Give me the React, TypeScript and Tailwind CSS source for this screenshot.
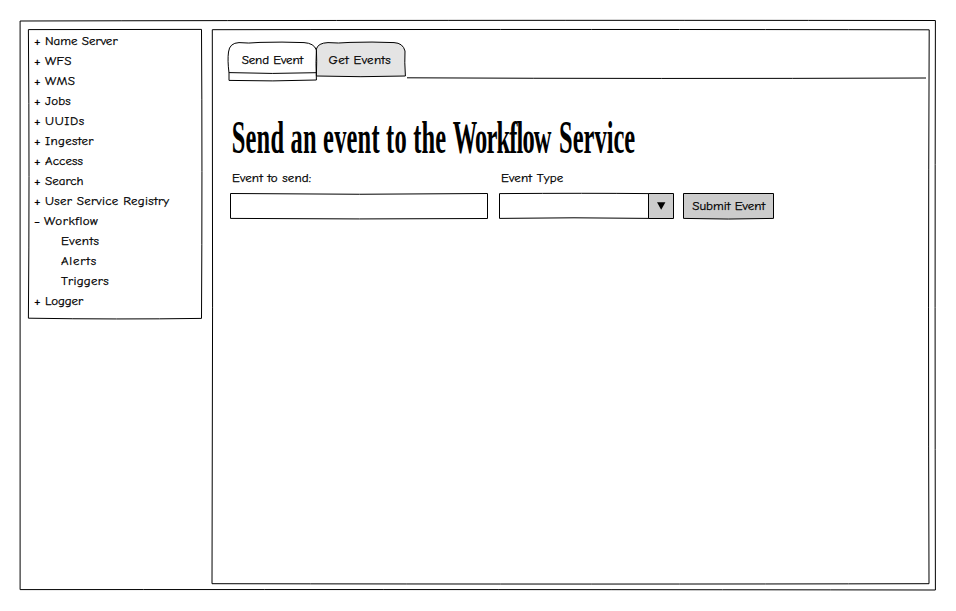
import type { ReactNode } from 'react';

const hand = "font-['Comic_Sans_MS','Comic_Neue','Open_Sans',sans-serif]";

function Sketch({ d, fill = 'none' }: { d: string; fill?: string }) {
  return (
    <svg className="pointer-events-none absolute inset-0 h-full w-full overflow-visible" aria-hidden="true">
      <path d={d} fill={fill} stroke="#000" strokeWidth="1" strokeLinejoin="round" />
    </svg>
  );
}

function Label({ children, className = '' }: { children: ReactNode; className?: string }) {
  return <span className={`relative block scale-x-[1.083] whitespace-pre ${className}`}>{children}</span>;
}

const items = [
  { sign: '+', text: 'Name Server', style: 'tracking-[0px]' },
  { sign: '+', text: 'WFS', style: 'tracking-[0.2px]' },
  { sign: '+', text: 'WMS', style: 'tracking-[0.3px]' },
  { sign: '+', text: 'Jobs', style: 'tracking-[0.2px]' },
  { sign: '+', text: 'UUIDs', style: 'tracking-[0.6px]' },
  { sign: '+', text: 'Ingester', style: 'tracking-[0.3px]' },
  { sign: '+', text: 'Access', style: 'tracking-[0.1px]' },
  { sign: '+', text: 'Search', style: 'tracking-[0px]' },
  { sign: '+', text: 'User Service Registry', style: 'tracking-[0.25px]' },
  { sign: '-', text: 'Workflow', style: 'tracking-[0.5px] -ml-px' },
  { sign: '', text: 'Events', style: 'tracking-[0.4px]' },
  { sign: '', text: 'Alerts', style: 'tracking-[0.75px]' },
  { sign: '', text: 'Triggers', style: 'tracking-[0.25px]' },
  { sign: '+', text: 'Logger', style: 'tracking-[-0.1px]' },
];

function Sidebar() {
  return (
    <nav className="relative h-[290px] w-[174px] pt-0.5 pl-[7px]">
      <Sketch d="M.4 .6 L173.5 .4 Q174.4 140 173.5 289.4 Q90 290.6 .4 289.2 Q1.6 150 .4 .6Z" />
      <ul>
        {items.map((item) => (
          <li key={item.text} className={`flex h-5 items-center ${item.sign ? '' : 'pl-[26px]'}`}>
            {item.sign && <span className="-ml-[1px] w-[11px] text-[15px]">{item.sign}</span>}
            <Label className={`origin-left ${item.style}`}>{item.text}</Label>
          </li>
        ))}
      </ul>
    </nav>
  );
}

function Tabs() {
  return (
    <div className="flex h-[39px]">
      <div className="relative flex h-[39px] w-[88px] justify-center pt-2">
        <Sketch d="M1 31 Q-.6 18 .5 10 Q1.5 1 11 .6 Q20 1.6 32 .4 Q54 -.3 76 .6 Q86 1.2 88.4 8 Q87.6 20 88.4 38 Q45 39.6 1 38.4Z M1 30.6 Q44 32.2 88 30.7" />
        <Label className="tracking-[-0.1px]">Send Event</Label>
      </div>
      <div className="relative flex h-[34px] w-[90px] justify-center pt-2 pr-[2px]">
        <Sketch fill="#e4e4e4" d="M.4 34 Q1 18 .4 7 Q2 1 12 .6 Q22 1.5 34 .4 Q56 -.4 78 .6 Q87 1 89 9 Q88.4 20 89.4 34 Q45 35.4 .4 34Z" />
        <Label className="tracking-[0.25px]">Get Events</Label>
      </div>
      <div className="relative ml-[1px] h-[37px] w-[519px]">
        <Sketch d="M0 35.8 Q250 37 519 36" />
      </div>
    </div>
  );
}

function EventForm() {
  return (
    <div className="flex">
      <div className="w-[269px]">
        <Label className="ml-[2px] origin-left tracking-[0.1px]">Event to send:</Label>
        <div className="relative mt-[5px] h-[26px] w-[258px]">
          <Sketch d="M.5 .5 Q130 2 257.5 .5 L257.5 25.5 Q130 26.4 .5 25.4Z" />
        </div>
      </div>
      <div className="w-[184px]">
        <Label className="ml-[2px] origin-left tracking-[0.15px]">Event Type</Label>
        <div className="relative mt-[5px] flex h-[26px] w-[175px] justify-end">
          <Sketch d="M.5 .6 Q90 0 149.5 .6 L149.5 25.4 Q75 24.2 .5 25.4Z" />
          <div className="relative flex w-[26px] items-center justify-center">
            <Sketch fill="#ccc" d="M.5 .5 H25.5 V25.5 H.5Z" />
            <svg className="relative h-[8px] w-[9px]" viewBox="0 0 9 8"><path d="M0 .3H8.4L4.2 7.8Z" /></svg>
          </div>
        </div>
      </div>
      <button className="relative mt-[25px] flex h-[26px] w-[91px] items-center justify-center">
        <Sketch fill="#ccc" d="M.5 .5 H90.5 V25.4 Q45 26.7 .5 25.4Z" />
        <Label>Submit Event</Label>
      </button>
    </div>
  );
}

export default function App() {
  return (
    <div className={`h-[611px] w-[956px] bg-white pt-5 pl-5 text-[12px] leading-5 text-black [-webkit-text-stroke:0.25px_#000] ${hand}`}>
      <div className="relative flex h-[571px] w-[916px] gap-[10px] pt-[9px] pl-2">
        <Sketch d="M.1 1 Q400 0 915.4 .5 Q914.8 290 915.4 570 Q500 569.4 .1 569.6Z" />
        <Sidebar />
        <main className="relative h-[556px] w-[718px] pt-[13px] pl-4">
          <Sketch d="M.3 .7 Q400 .2 717.2 .8 Q716 280 717 554.7 Q400 555.4 0 554.7 Q1 280 .3 .7Z" />
          <Tabs />
          <h1 className="mt-[30px] mb-[3px] h-[54px] w-[403px] origin-left scale-x-[0.532] pl-[7px] font-['Liberation_Serif',serif] text-[46px] leading-[54px] font-bold whitespace-nowrap [-webkit-text-stroke:0]">
            <span className="tracking-[0.37px]">Send an event to the </span>
            <span className="mr-[6px] tracking-[-1.6px]">Workflow </span>
            <span>Service</span>
          </h1>
          <div className="pl-[2px]"><EventForm /></div>
        </main>
      </div>
    </div>
  );
}
